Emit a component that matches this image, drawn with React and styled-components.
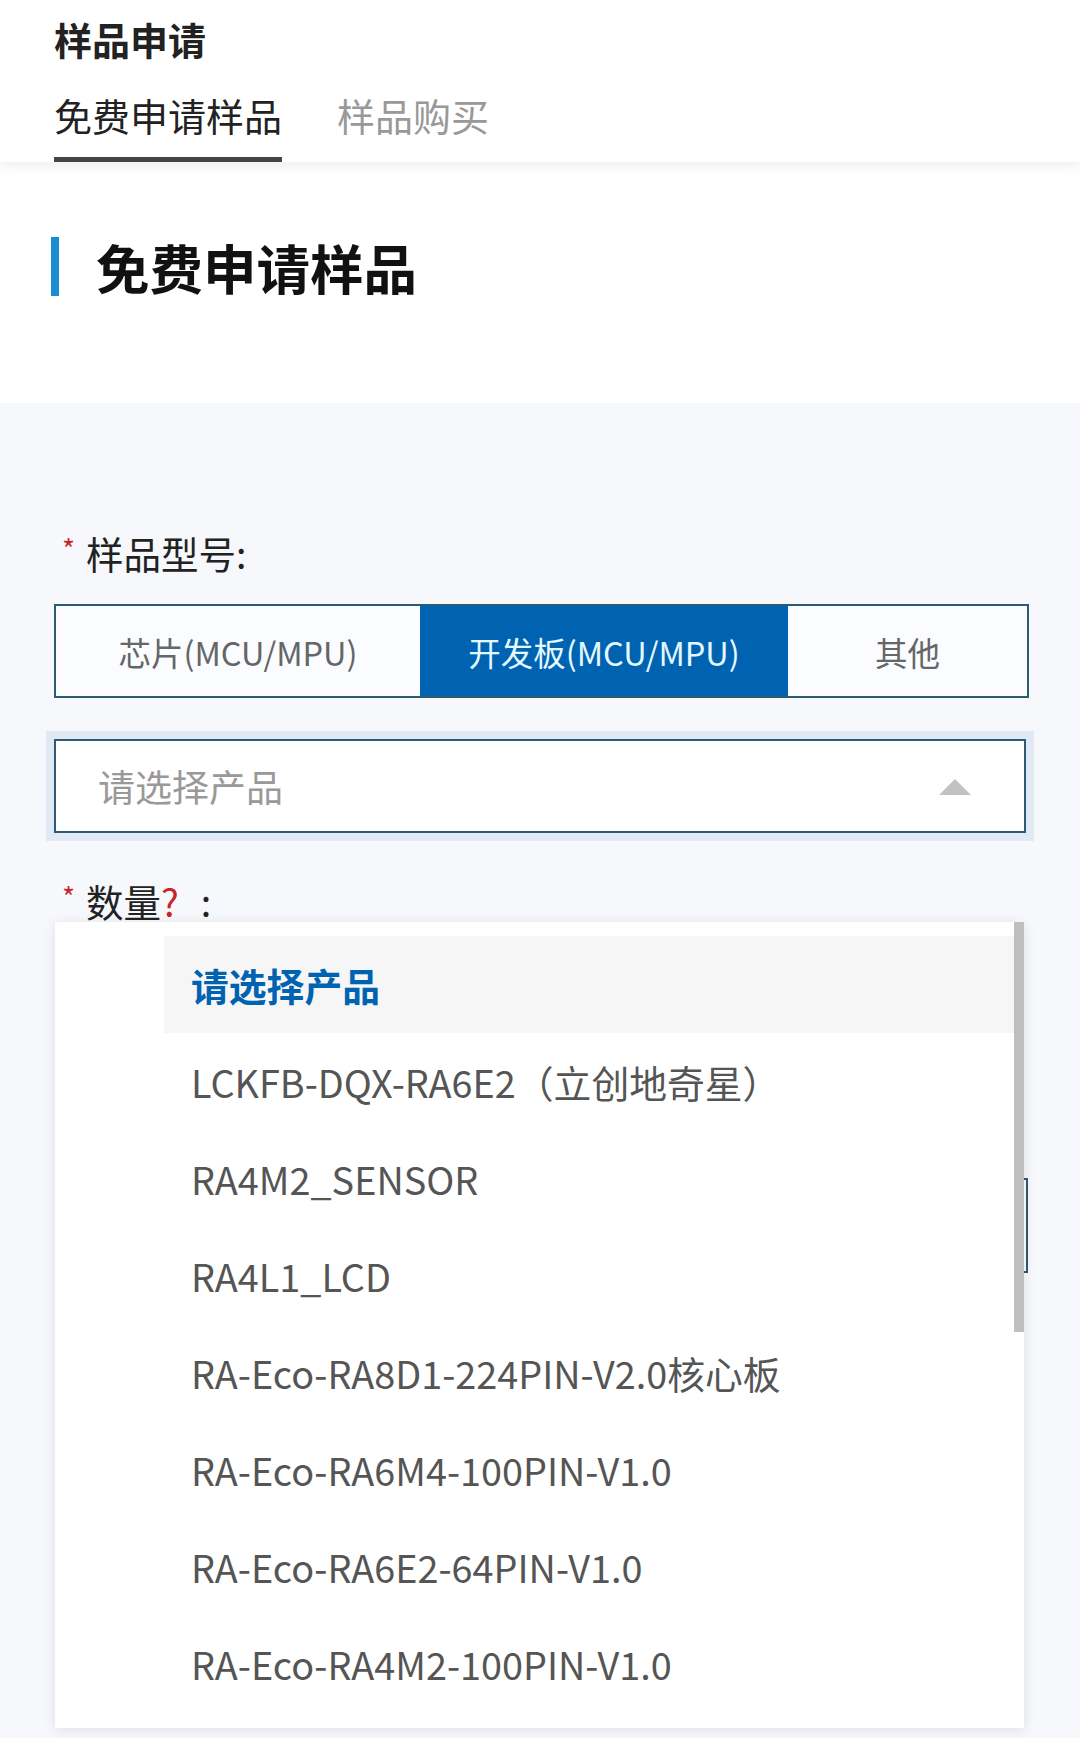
import React, { useState } from 'react';
import styled, { createGlobalStyle } from 'styled-components';

const GlobalStyle = createGlobalStyle`
  html, body {
    margin: 0;
    padding: 0;
    background: #f6f8fb;
  }
  body {
    font-family: "Noto Sans CJK SC", "Noto Sans", sans-serif;
    color: #222;
  }
  * { box-sizing: border-box; }
`;

const PRODUCTS = [
  'LCKFB-DQX-RA6E2（立创地奇星）',
  'RA4M2_SENSOR',
  'RA4L1_LCD',
  'RA-Eco-RA8D1-224PIN-V2.0核心板',
  'RA-Eco-RA6M4-100PIN-V1.0',
  'RA-Eco-RA6E2-64PIN-V1.0',
  'RA-Eco-RA4M2-100PIN-V1.0',
];

const TYPES = ['芯片(MCU/MPU)', '开发板(MCU/MPU)', '其他'];
const TYPE_WIDTHS = [364, 368, 239]; // segment widths as laid out on the site

const Page = styled.div`
  width: 1080px;
  min-height: 1738px;
  background: #f6f8fb;
`;

// Top header with the tabs
const Header = styled.header`
  position: relative;
  z-index: 2;
  background: #fff;
  padding-left: 54px;
  box-shadow: 0 4px 12px rgba(0, 0, 0, 0.07);
`;

const HeaderTitle = styled.h1`
  margin: 0;
  height: 82px;
  line-height: 78px;
  font-size: 38px;
  font-weight: 700;
  color: #222;
`;

const TabRow = styled.nav`
  display: flex;
  gap: 55px;
  height: 80px;
`;

const Tab = styled.div`
  height: 80px;
  line-height: 66px;
  padding-bottom: 9px;
  font-size: 38px;
  color: ${({ $active }) => ($active ? '#222' : '#999')};
  border-bottom: 5px solid ${({ $active }) => ($active ? '#444' : 'transparent')};
  cursor: pointer;
`;

const Section = styled.section`
  background: #fff;
  padding: 75px 0 107px 51px;
`;

const SectionTitle = styled.h2`
  margin: 0;
  display: flex;
  align-items: center;
  gap: 37px;
  height: 59px;
  font-size: 53.5px;
  font-weight: 700;
  color: #111;

  &::before {
    content: '';
    width: 8px;
    height: 59px;
    background: #1d8dd3;
  }
`;

const Form = styled.div`
  padding: 125px 0 60px 54px;
`;

const Label = styled.div`
  height: 50px;
  line-height: 40px;
  padding-left: 8px;
  font-size: 37.5px;
  color: #222;
  white-space: nowrap;
`;

const Star = styled.span`
  display: inline-block;
  width: 24px;
  font-size: 28px;
  color: #c8242b;
  vertical-align: 9px;
`;

const Hint = styled.span`
  color: #c8242b;
`;

const Colon = styled.span`
  margin-left: 22px;
`;

const Segmented = styled.div`
  display: flex;
  width: 975px;
  height: 94px;
  margin-top: 26px;
  border: 2px solid #2d5a74;
  background: #fafcff;
`;

const Segment = styled.button`
  flex: none;
  height: 100%;
  border: 0;
  margin: 0;
  padding: 0;
  font-family: inherit;
  font-size: 32.5px;
  color: ${({ $active }) => ($active ? '#e4f8ff' : '#666')};
  background: ${({ $active }) => ($active ? '#0063b1' : 'transparent')};
  cursor: pointer;
`;

const SelectWrap = styled.div`
  position: relative;
  width: 972px;
  height: 94px;
  margin-top: 41px;
  border: 2px solid #2d5a74;
  background: #fff;
  box-shadow: 0 0 0 8px #e1e9f5;
  display: flex;
  align-items: center;
  justify-content: space-between;
  padding: 0 53px 0 42px;
`;

const Placeholder = styled.span`
  font-size: 37px;
  color: #999;
`;

const Caret = styled.svg`
  width: 32px;
  height: 16px;
  margin-top: 2px;
`;

const Dropdown = styled.div`
  position: absolute;
  z-index: 5;
  top: 181px;
  left: -1px;
  width: 969px;
  height: 806px;
  background: #fff;
  box-shadow: 0 2px 12px rgba(0, 0, 0, 0.1);
  overflow: hidden;
`;

const OptionList = styled.ul`
  margin: 0;
  padding: 14px 10px 16px 109px;
  list-style: none;
`;

const ScrollThumb = styled.span`
  position: absolute;
  top: 0;
  right: 0;
  width: 10px;
  height: 410px;
  background: #bfbfbf;
`;

const Option = styled.li`
  height: 97px;
  line-height: 97px;
  padding-left: 27px;
  font-size: 37.8px;
  font-weight: ${({ $selected }) => ($selected ? 700 : 400)};
  color: ${({ $selected }) => ($selected ? '#0063b1' : '#555')};
  background: ${({ $selected }) => ($selected ? '#f6f6f6' : 'transparent')};
  white-space: nowrap;
  cursor: pointer;
`;

const QtyLabel = styled(Label)`
  margin-top: 43px;
`;

const QtyInput = styled.input`
  display: block;
  width: 970px;
  height: 95px;
  margin: 252px 0 0 4px;
  border: 2px solid #2d5a74;
  background: #fff;
  font-family: inherit;
  font-size: 36px;
  padding: 0 40px;
`;

export default function App() {
  const [tab, setTab] = useState(0);
  const [type, setType] = useState(1);

  return (
    <Page>
      <GlobalStyle />
      <Header>
        <HeaderTitle>样品申请</HeaderTitle>
        <TabRow>
          {['免费申请样品', '样品购买'].map((t, i) => (
            <Tab key={t} $active={tab === i} onClick={() => setTab(i)}>
              {t}
            </Tab>
          ))}
        </TabRow>
      </Header>

      <Section>
        <SectionTitle>免费申请样品</SectionTitle>
      </Section>

      <Form>
        <Label>
          <Star>*</Star>样品型号:
        </Label>
        <Segmented>
          {TYPES.map((t, i) => (
            <Segment
              key={t}
              $active={type === i}
              style={{ width: TYPE_WIDTHS[i] }}
              onClick={() => setType(i)}
            >
              {t}
            </Segment>
          ))}
        </Segmented>

        <SelectWrap>
          <Placeholder>请选择产品</Placeholder>
          <Caret viewBox="0 0 32 16">
            <path d="M16 0 L32 16 L0 16 Z" fill="#c2c2c2" />
          </Caret>
          <Dropdown>
            <OptionList>
              <Option $selected>请选择产品</Option>
              {PRODUCTS.map((p) => (
                <Option key={p}>{p}</Option>
              ))}
            </OptionList>
            <ScrollThumb />
          </Dropdown>
        </SelectWrap>

        <QtyLabel>
          <Star>*</Star>数量<Hint>?</Hint>
          <Colon>:</Colon>
        </QtyLabel>
        <QtyInput type="number" defaultValue="" />
      </Form>
    </Page>
  );
}
